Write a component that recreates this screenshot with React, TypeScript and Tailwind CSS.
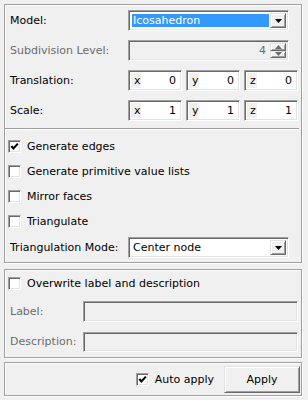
import React from 'react';

const sunken =
  'border border-t-[#a0a0a0] border-l-[#a0a0a0] border-b-white border-r-white shadow-[inset_1px_1px_0_#696969,inset_-1px_-1px_0_#e3e3e3]';
const raised =
  'border border-t-[#e3e3e3] border-l-[#e3e3e3] border-b-[#696969] border-r-[#696969] shadow-[inset_1px_1px_0_#fff,inset_-1px_-1px_0_#a0a0a0]';
const panel =
  'border border-[#a0a0a0] shadow-[inset_1px_1px_0_#fff,1px_1px_0_#fff]';

function Arrow({ up = false, color = '#000' }: { up?: boolean; color?: string }) {
  return (
    <svg width="7" height="4" viewBox="0 0 7 4" className={up ? 'rotate-180' : ''}>
      <path d="M0 0h7L3.5 4z" fill={color} />
    </svg>
  );
}

function Combo({ value, selected = false }: { value: string; selected?: boolean }) {
  return (
    <div className={`w-[161px] h-[21px] bg-white flex p-[2px] ${sunken}`}>
      <div className="flex-1 p-[1px] flex">
        <div
          className={`flex-1 flex items-center pl-[1px] ${selected ? 'bg-[#3399ff] text-white' : ''}`}
        >
          {value}
        </div>
      </div>
      <div className={`w-[16px] bg-[#f0f0f0] flex items-center justify-center ${raised}`}>
        <Arrow />
      </div>
    </div>
  );
}

function Spinner({ value }: { value: string }) {
  return (
    <div className={`w-[161px] h-[21px] bg-[#f0f0f0] flex p-[2px] ${sunken}`}>
      <div className="flex-1 flex items-center justify-end pr-[4px] text-[#6d6d6d]">{value}</div>
      <div className="w-[16px] flex flex-col">
        <div className={`flex-1 bg-[#f0f0f0] flex items-center justify-center ${raised}`}>
          <Arrow up color="#6d6d6d" />
        </div>
        <div className={`flex-1 bg-[#f0f0f0] flex items-center justify-center ${raised}`}>
          <Arrow color="#6d6d6d" />
        </div>
      </div>
    </div>
  );
}

function Coord({ axis, value }: { axis: string; value: string }) {
  return (
    <div className={`w-[54px] h-[21px] bg-white flex p-[2px] ${sunken}`}>
      <span className="w-[10px] bg-[#f0f0f0] pl-[3px] flex items-center">{axis}</span>
      <span className="flex-1 flex items-center justify-end pr-[3px]">{value}</span>
    </div>
  );
}

function Check({ checked = false }: { checked?: boolean }) {
  return (
    <div className={`w-[13px] h-[13px] bg-white shrink-0 flex items-center justify-center ${sunken}`}>
      {checked && (
        <svg width="9" height="9" viewBox="0 0 9 9">
          <path d="M1.3 4L3.4 6.4L7.9 1.6" stroke="#000" strokeWidth="2.1" fill="none" />
        </svg>
      )}
    </div>
  );
}

function CheckRow({ label, checked = false }: { label: string; checked?: boolean }) {
  return (
    <div className="h-[25px] flex items-center gap-[6px] -ml-[2px]">
      <Check checked={checked} />
      <span>{label}</span>
    </div>
  );
}

export default function App() {
  return (
    <div className="w-[308px] h-[400px] bg-[#f0f0f0] pl-[4px] pt-[4px] font-['DejaVu_Sans',sans-serif] text-[11px] text-black leading-none">
      <div className={`w-[298px] h-[259px] pl-[5px] pr-[3px] pt-[5px] ${panel}`}>
        <div className="flex flex-col gap-[9px]">
          <div className="h-[21px] flex items-center">
            <span className="w-[118px]">Model:</span>
            <Combo value="Icosahedron" selected />
          </div>
          <div className="h-[21px] flex items-center">
            <span className="w-[118px] text-[#6d6d6d]">Subdivision Level:</span>
            <Spinner value="4" />
          </div>
          <div className="h-[21px] flex items-center">
            <span className="w-[118px]">Translation:</span>
            <div className="flex gap-[4px]">
              <Coord axis="x" value="0" />
              <Coord axis="y" value="0" />
              <Coord axis="z" value="0" />
            </div>
          </div>
          <div className="h-[21px] flex items-center">
            <span className="w-[118px]">Scale:</span>
            <div className="flex gap-[4px]">
              <Coord axis="x" value="1" />
              <Coord axis="y" value="1" />
              <Coord axis="z" value="1" />
            </div>
          </div>
        </div>
        <div className="mt-[7px] -ml-[5px] -mr-[1px] border-t border-t-[#a0a0a0] border-b border-b-white" />
        <div className="mt-[4px] flex flex-col">
          <CheckRow label="Generate edges" checked />
          <CheckRow label="Generate primitive value lists" />
          <CheckRow label="Mirror faces" />
          <CheckRow label="Triangulate" />
        </div>
        <div className="mt-[3px] h-[21px] flex items-center">
          <span className="w-[118px]">Triangulation Mode:</span>
          <Combo value="Center node" />
        </div>
      </div>

      <div className={`mt-[6px] w-[298px] h-[89px] pl-[5px] pr-[3px] pt-[1px] ${panel}`}>
        <CheckRow label="Overwrite label and description" />
        <div className="mt-[5px] flex flex-col gap-[9px]">
          <div className="h-[21px] flex items-center">
            <span className="w-[73px] text-[#6d6d6d]">Label:</span>
            <div className={`flex-1 h-[21px] bg-[#f0f0f0] ${sunken}`} />
          </div>
          <div className="h-[21px] flex items-center">
            <span className="w-[73px] text-[#6d6d6d]">Description:</span>
            <div className={`flex-1 h-[20px] bg-[#f0f0f0] ${sunken}`} />
          </div>
        </div>
      </div>

      <div className={`mt-[4px] w-[298px] h-[34px] pr-[1px] flex items-center justify-end ${panel}`}>
        <div className="flex items-center gap-[6px]">
          <Check checked />
          <span>Auto apply</span>
        </div>
        <button className={`ml-[10px] w-[76px] h-[27px] bg-[#f0f0f0] ${raised}`}>Apply</button>
      </div>
    </div>
  );
}
